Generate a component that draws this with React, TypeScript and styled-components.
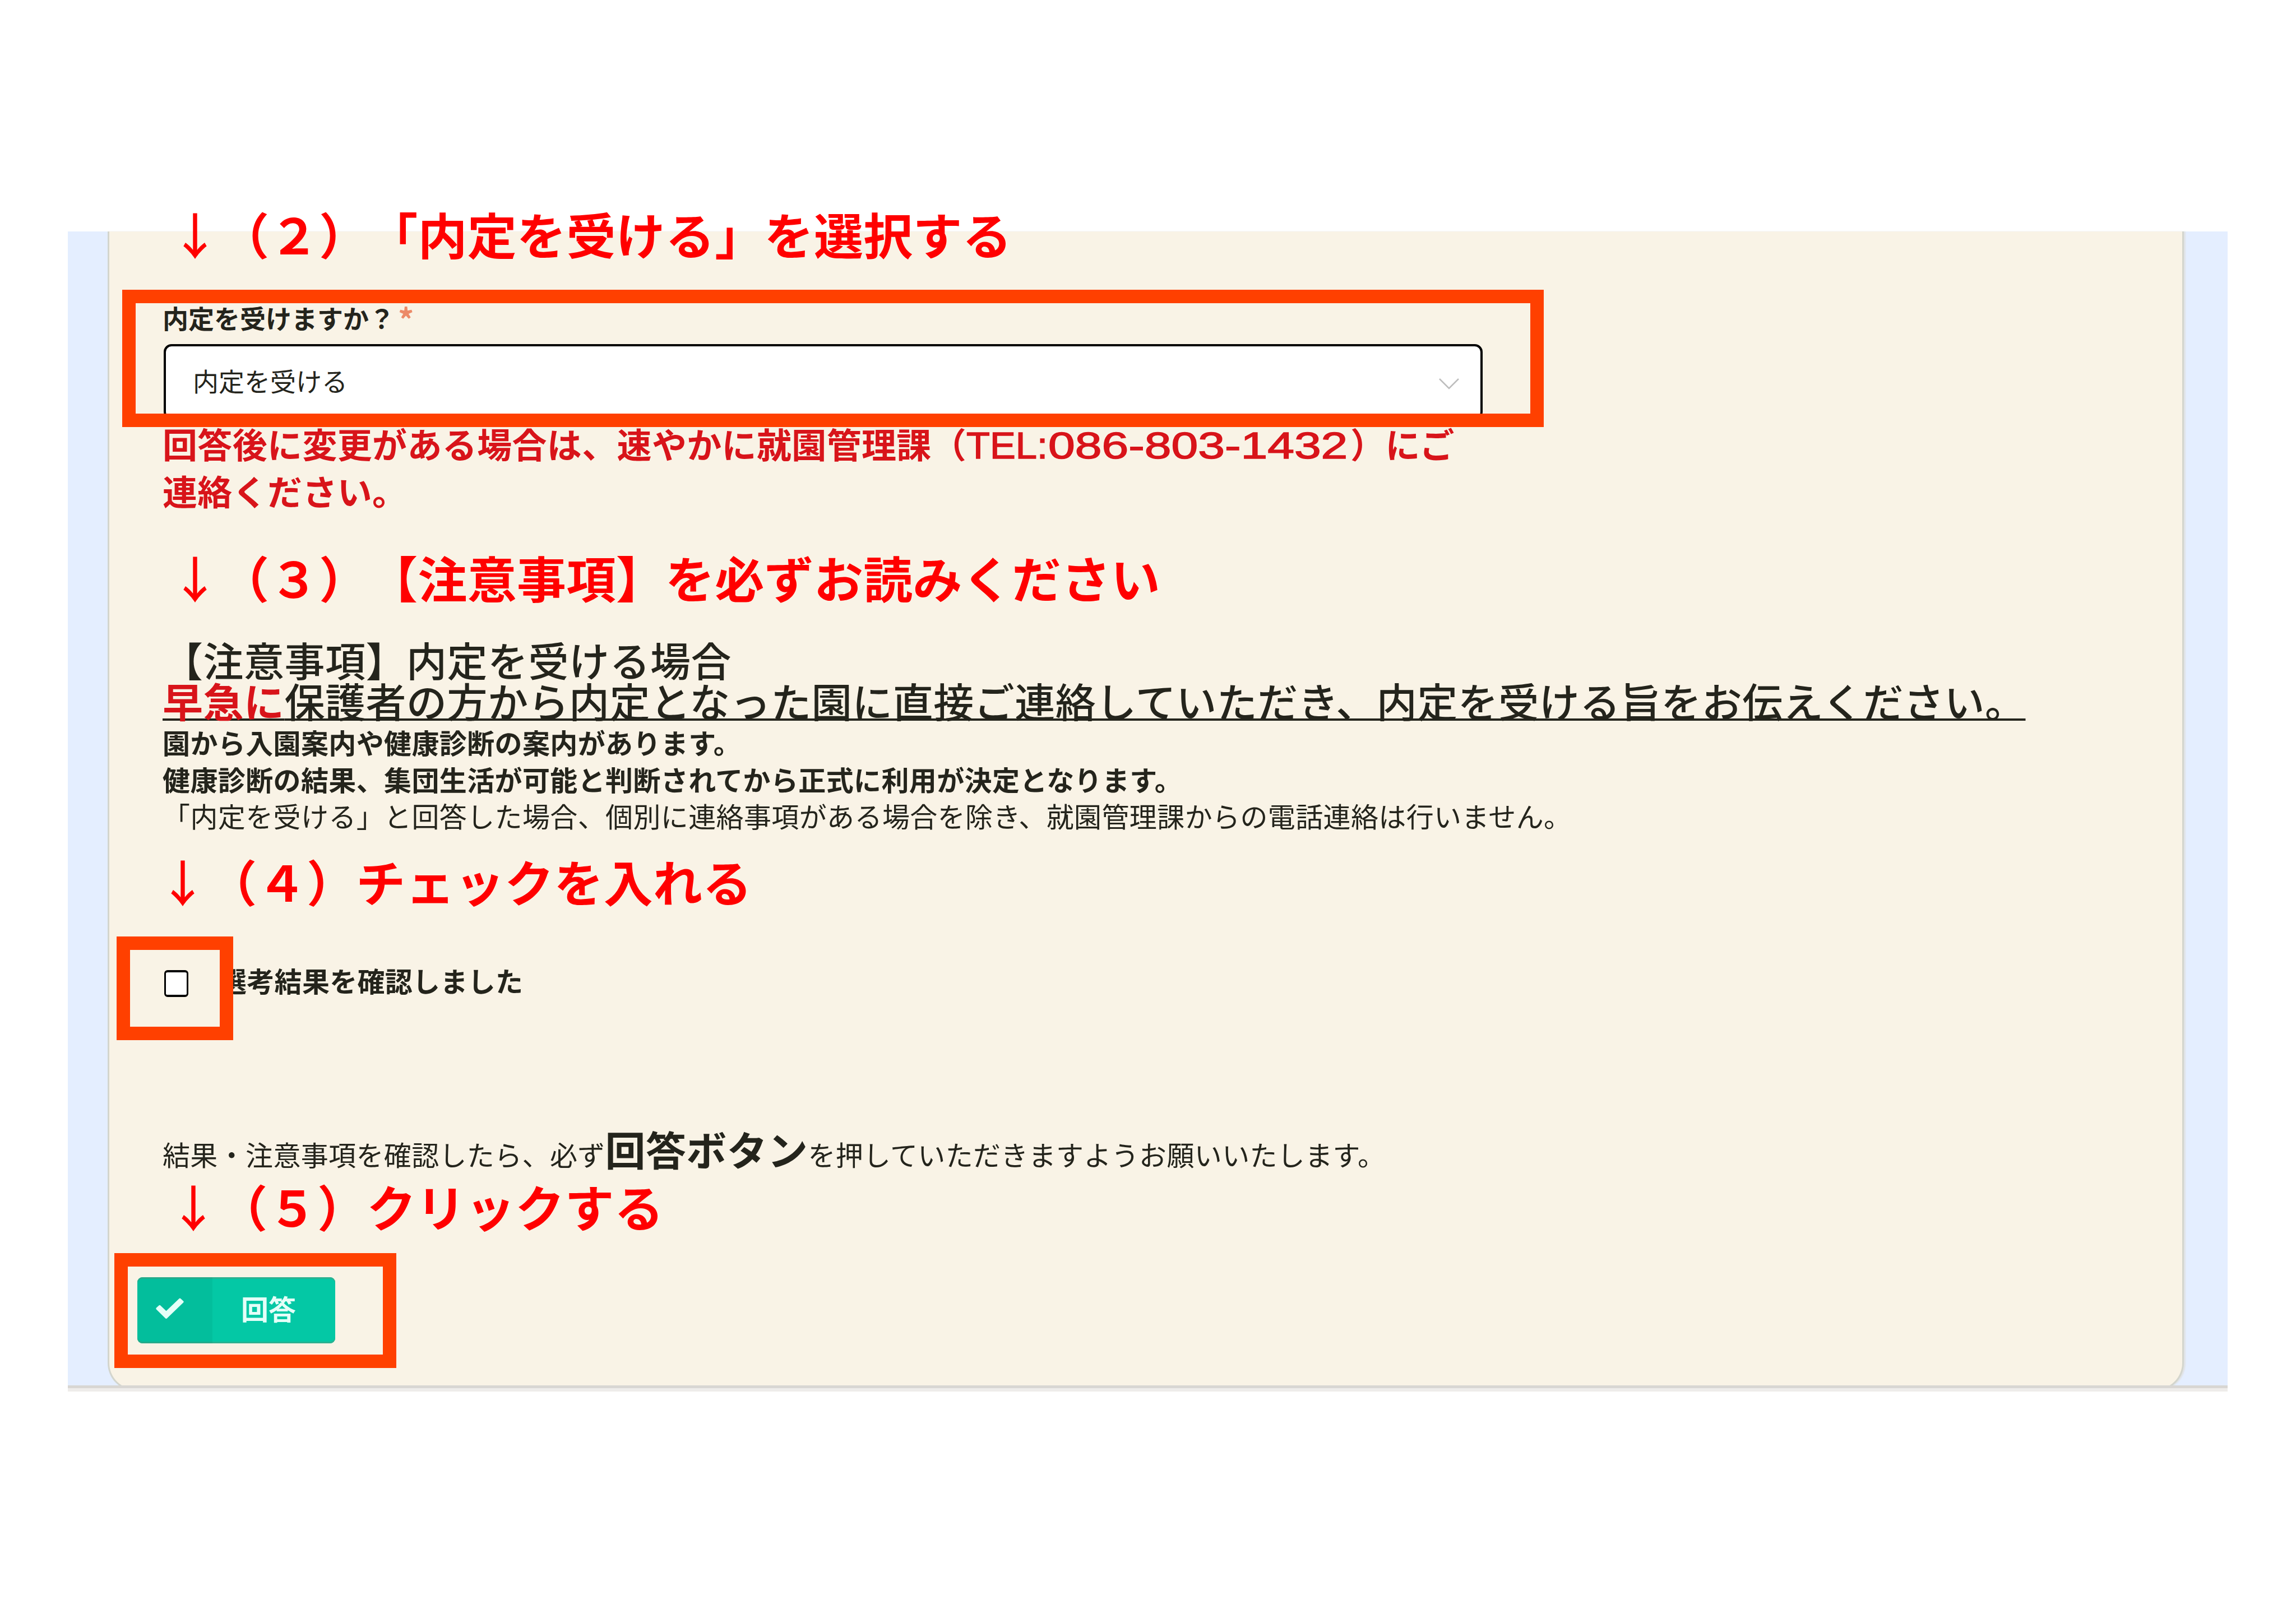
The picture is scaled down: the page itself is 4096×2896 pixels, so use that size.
import React from "react";
import styled, { createGlobalStyle } from "styled-components";

const GlobalStyle = createGlobalStyle`
  * { box-sizing: border-box; }
  html, body { margin: 0; padding: 0; background: #fff; }
  body {
    font-family: "Noto Sans CJK JP", "Liberation Sans", sans-serif;
    color: #24241c;
    text-spacing-trim: space-all;
  }
`;

const Page = styled.main`
  width: 4096px;
  height: 2896px;
  padding: 413px 122px 0 121px;
  background: #fff;
  overflow: hidden;
`;

/* Cuts the card at the bottom edge, while the first step may rise above the top. */
const Backdrop = styled.section`
  height: 2059px;
  padding: 0 78px 0 71px;
  background: #e4eeff;
  clip-path: inset(-80px 0 0 0);
`;

const Card = styled.form`
  display: flex;
  flex-direction: column;
  align-items: flex-start;
  height: 2069px;
  padding-left: 95px;
  background: #f9f3e6;
  border: 3px solid #d3d5cd;
  border-top: 0;
  border-radius: 0 0 50px 50px;
  box-shadow: 3px 0 2px #e0e3e6;
`;

const EdgeLine = styled.div`
  height: 11px;
  background: #eeecea;
  border-top: 5px solid #d8d6d3;
`;

const Step = styled.h2<{ $top: number; $indent: number }>`
  margin: ${(p) => p.$top}px 0 0 ${(p) => p.$indent}px;
  font-size: 88px;
  line-height: 88px;
  font-weight: 700;
  letter-spacing: 0.3px;
  color: #ff0000;
  white-space: nowrap;
`;

const Arrow = styled.span`
  font-weight: 500;
`;

const Group = styled.div<{ $top: number }>`
  position: relative;
  margin-top: ${(p) => p.$top}px;
`;

const Highlight = styled.div<{ $x: number; $y: number; $w: number; $h: number }>`
  position: absolute;
  left: ${(p) => p.$x}px;
  top: ${(p) => p.$y}px;
  width: ${(p) => p.$w}px;
  height: ${(p) => p.$h}px;
  border: 24px solid #ff4000;
`;

const FieldLabel = styled.label`
  display: flex;
  height: 60px;
  font-size: 46px;
  line-height: 60px;
  font-weight: 700;
  white-space: nowrap;
`;

const Required = styled.span`
  margin-left: 6px;
  font-size: 56px;
  line-height: 64px;
  color: #ec8a68;
`;

const SelectBox = styled.div`
  display: flex;
  align-items: center;
  justify-content: space-between;
  width: 2353px;
  height: 135px;
  margin: 18px 0 0 2px;
  padding: 0 38px 9px 48px;
  background: #fff;
  border: 4px solid #000;
  border-bottom-width: 2px;
  border-radius: 14px;
  font-size: 46px;
  line-height: 60px;
`;

const Chevron = styled.svg`
  width: 36px;
  height: 22px;
  margin-top: 14px;
`;

const Warning = styled.p`
  margin: 0;
  font-size: 62px;
  line-height: 84px;
  letter-spacing: 0.35px;
  font-weight: 700;
  color: #d8141a;
  white-space: nowrap;
`;

const Wide = styled.span<{ $width: number; $stretch: number }>`
  display: inline-block;
  width: ${(p) => p.$width}px;
  font-family: "Liberation Sans", sans-serif;
  font-size: 66px;
  font-weight: 400;
  line-height: 70px;
  letter-spacing: 0;
  -webkit-text-stroke: 1.5px #d8141a;
  transform: scaleX(${(p) => p.$stretch});
  transform-origin: left;
`;

const Notice = styled.div`
  margin-top: 66px;
  font-size: 72px;
  line-height: 73px;
  letter-spacing: 0.5px;
  font-weight: 500;
  white-space: nowrap;
`;

const Underlined = styled.div`
  text-decoration: underline;
  text-decoration-thickness: 4px;
  text-underline-offset: 2px;
  text-decoration-skip-ink: none;
`;

const Urgent = styled.span`
  color: #d8141a;
  font-weight: 700;
`;

const Details = styled.div`
  margin-top: 6px;
  font-size: 49px;
  line-height: 65.5px;
  letter-spacing: 0.38px;
  white-space: nowrap;
`;

const DetailLine = styled.div<{ $strong?: boolean }>`
  font-weight: ${(p) => (p.$strong ? 700 : 400)};
`;

const CheckRow = styled.label`
  display: flex;
  align-items: center;
  height: 157px;
  font-size: 49px;
  line-height: 60px;
  letter-spacing: 0.3px;
  font-weight: 700;
  white-space: nowrap;
`;

const CheckBox = styled.span`
  width: 43px;
  height: 48px;
  margin: 12px 55px 0 3px;
  background: #fff;
  border: 3px solid #000;
  border-width: 4px 3px;
  border-radius: 6px;
`;

const Reminder = styled.p`
  margin: 185px 0 0;
  height: 82px;
  font-size: 49px;
  line-height: 72px;
  letter-spacing: 0.35px;
  white-space: nowrap;
`;

const Emphasis = styled.strong`
  font-size: 72px;
  font-weight: 700;
`;

const SubmitButton = styled.button`
  display: flex;
  width: 353px;
  height: 118px;
  margin-left: -45px;
  padding: 0;
  border: 0;
  border-radius: 9px;
  overflow: hidden;
  background: #04c8a5;
  box-shadow: inset 0 3px 0 #2bb191, inset 0 -3px 0 #2bb191;
  color: #e4fff8;
  font-family: inherit;
  font-size: 49px;
  font-weight: 700;
  line-height: 60px;
`;

const SubmitIcon = styled.span`
  display: flex;
  align-items: center;
  width: 134px;
  height: 100%;
  padding: 0 0 6px 33px;
  background: rgba(0, 120, 90, 0.12);
`;

const SubmitText = styled.span`
  display: flex;
  align-items: center;
  height: 100%;
  padding: 0 0 8px 51px;
`;

function StepTitle({ top, indent, children }: { top: number; indent: number; children: string }) {
  return (
    <Step $top={top} $indent={indent}>
      <Arrow>↓</Arrow>
      {children}
    </Step>
  );
}

export default function App() {
  return (
    <>
      <GlobalStyle />
      <Page>
        <Backdrop>
          <Card>
            <StepTitle top={-41} indent={14}>（２）「内定を受ける」を選択する</StepTitle>

            <Group $top={76}>
              <FieldLabel>
                内定を受けますか？<Required>*</Required>
              </FieldLabel>
              <SelectBox>
                内定を受ける
                <Chevron viewBox="0 0 36 22" fill="none" stroke="#bdbdbd" strokeWidth="2.5">
                  <path d="M1 2 18 19 35 2" />
                </Chevron>
              </SelectBox>
              <Highlight $x={-72} $y={-19} $w={2536} $h={245} />
            </Group>

            <Warning>
              回答後に変更がある場合は、速やかに就園管理課（
              <Wide $width={146} $stretch={1.04}>TEL:</Wide>
              <Wide $width={539} $stretch={1.3}>086-803-1432</Wide>
              ）にご
              <br />
              連絡ください。
            </Warning>

            <StepTitle top={68} indent={14}>（３）【注意事項】を必ずお読みください</StepTitle>

            <Notice>
              <div>【注意事項】内定を受ける場合</div>
              <Underlined>
                <Urgent>早急に</Urgent>保護者の方から内定となった園に直接ご連絡していただき、内定を受ける旨をお伝えください。
              </Underlined>
            </Notice>
            <Details>
              <DetailLine $strong>園から入園案内や健康診断の案内があります。</DetailLine>
              <DetailLine $strong>健康診断の結果、集団生活が可能と判断されてから正式に利用が決定となります。</DetailLine>
              <DetailLine>
                「内定を受ける」と回答した場合、個別に連絡事項がある場合を除き、就園管理課からの電話連絡は行いません。
              </DetailLine>
            </Details>

            <StepTitle top={39} indent={-8}>（４）チェックを入れる</StepTitle>

            <Group $top={56}>
              <CheckRow>
                <CheckBox />
                選考結果を確認しました
              </CheckRow>
              <Highlight $x={-82} $y={0} $w={208} $h={185} />
            </Group>

            <Reminder>
              結果・注意事項を確認したら、必ず<Emphasis>回答ボタン</Emphasis>を押していただきますようお願いいたします。
            </Reminder>

            <StepTitle top={12} indent={11}>（５）クリックする</StepTitle>

            <Group $top={84}>
              <SubmitButton type="button">
                <SubmitIcon>
                  <svg width="50" height="37" viewBox="0 0 50 37" fill="#e4fff8">
                    <path d="M17 36.2 1 20.4a2 2 0 0 1 0-2.8l4.4-4.2a2 2 0 0 1 2.9 0L18.500 23.200 41.500 1.200a2 2 0 0 1 2.900 0L49 5.400a2 2 0 0 1 0 2.900L20 36.200a2 2 0 0 1-3 0Z" />
                  </svg>
                </SubmitIcon>
                <SubmitText>回答</SubmitText>
              </SubmitButton>
              <Highlight $x={-86} $y={-43} $w={503} $h={205} />
            </Group>
          </Card>
        </Backdrop>
        <EdgeLine />
      </Page>
    </>
  );
}
